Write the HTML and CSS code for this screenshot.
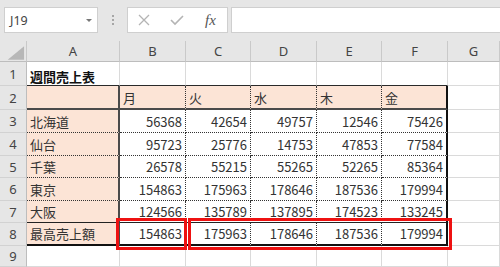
FILE: index.html
```html
<!DOCTYPE html>
<html lang="ja">
<head>
    <meta charset="UTF-8">
    <title>週間売上表</title>
    <link rel="stylesheet" href="styles.css">
</head>
<body>
    <div class="toolbar">
        <div class="namebox">
            <span>J19</span>
            <span class="arrow"></span>
        </div>
        <div class="grip"><i></i><i></i><i></i></div>
        <div class="fxbtns">
            <svg width="14" height="12" viewBox="0 0 14 12"><path d="M2 1 L12 11 M12 1 L2 11" stroke="#b4b4b4" stroke-width="1.3" fill="none"/></svg>
            <svg width="14" height="12" viewBox="0 0 14 12"><path d="M1 6 L5 10 L13 2" stroke="#b4b4b4" stroke-width="1.6" fill="none"/></svg>
            <span class="fx">fx</span>
        </div>
        <div class="formula"></div>
    </div>

    <div class="sheet">
        <!-- column headers -->
        <div class="corner">
            <svg width="27" height="20" viewBox="0 0 27 20"><polygon points="8,19 25,19 25,5" fill="#b7b7b7"/></svg>
        </div>
        <div class="ch">A</div>
        <div class="ch">B</div>
        <div class="ch">C</div>
        <div class="ch">D</div>
        <div class="ch">E</div>
        <div class="ch">F</div>
        <div class="ch">G</div>

        <!-- row 1 -->
        <div class="rh">1</div>
        <div class="c title top">週間売上表</div>
        <div class="c top"></div>
        <div class="c top"></div>
        <div class="c top"></div>
        <div class="c top"></div>
        <div class="c top"></div>
        <div class="c"></div>

        <!-- row 2 -->
        <div class="rh">2</div>
        <div class="c pk ta r2"></div>
        <div class="c pk tm r2">月</div>
        <div class="c pk tm r2">火</div>
        <div class="c pk tm r2">水</div>
        <div class="c pk tm r2">木</div>
        <div class="c pk tf r2">金</div>
        <div class="c"></div>

        <!-- row 3 -->
        <div class="rh">3</div>
        <div class="c pk ta dt">北海道</div>
        <div class="c num tm dt">56368</div>
        <div class="c num tm dt">42654</div>
        <div class="c num tm dt">49757</div>
        <div class="c num tm dt">12546</div>
        <div class="c num tf dt">75426</div>
        <div class="c"></div>

        <!-- row 4 -->
        <div class="rh">4</div>
        <div class="c pk ta dt">仙台</div>
        <div class="c num tm dt">95723</div>
        <div class="c num tm dt">25776</div>
        <div class="c num tm dt">14753</div>
        <div class="c num tm dt">47853</div>
        <div class="c num tf dt">77584</div>
        <div class="c"></div>

        <!-- row 5 -->
        <div class="rh">5</div>
        <div class="c pk ta dt">千葉</div>
        <div class="c num tm dt">26578</div>
        <div class="c num tm dt">55215</div>
        <div class="c num tm dt">55265</div>
        <div class="c num tm dt">52265</div>
        <div class="c num tf dt">85364</div>
        <div class="c"></div>

        <!-- row 6 -->
        <div class="rh">6</div>
        <div class="c pk ta dt">東京</div>
        <div class="c num tm dt">154863</div>
        <div class="c num tm dt">175963</div>
        <div class="c num tm dt">178646</div>
        <div class="c num tm dt">187536</div>
        <div class="c num tf dt">179994</div>
        <div class="c"></div>

        <!-- row 7 -->
        <div class="rh">7</div>
        <div class="c pk ta r7">大阪</div>
        <div class="c num tm r7">124566</div>
        <div class="c num tm r7">135789</div>
        <div class="c num tm r7">137895</div>
        <div class="c num tm r7">174523</div>
        <div class="c num tf r7">133245</div>
        <div class="c"></div>

        <!-- row 8 -->
        <div class="rh">8</div>
        <div class="c pk ta r8">最高売上額</div>
        <div class="c num tm r8">154863</div>
        <div class="c num tm r8">175963</div>
        <div class="c num tm r8">178646</div>
        <div class="c num tm r8">187536</div>
        <div class="c num tf r8">179994</div>
        <div class="c"></div>

        <!-- row 9 -->
        <div class="rh">9</div>
        <div class="c"></div>
        <div class="c"></div>
        <div class="c"></div>
        <div class="c"></div>
        <div class="c"></div>
        <div class="c"></div>
        <div class="c"></div>

        <!-- highlight marks -->
        <div class="mark mark-b"></div>
        <div class="mark mark-cf"></div>
    </div>
</body>
</html>
```

FILE: styles.css
```css
body {
    margin: 0;
    width: 500px;
    height: 267px;
    overflow: hidden;
    background: #fff;
    font-family: 'Noto Sans CJK JP', sans-serif;
    color: #333;
}

/* formula bar */
.toolbar {
    height: 41px;
    box-sizing: border-box;
    padding: 7px 0 0 4px;
    background: #e6e6e6;
    display: flex;
    align-items: flex-start;
}

.namebox {
    width: 94px;
    height: 26px;
    box-sizing: border-box;
    border: 1px solid #cfcfcf;
    background: #fff;
    display: flex;
    align-items: center;
    justify-content: space-between;
    padding: 0 5px 0 5px;
    font-family: 'Noto Sans', sans-serif;
    font-size: 12.5px;
    color: #444;
}

.arrow {
    width: 0;
    height: 0;
    border-left: 3px solid transparent;
    border-right: 3px solid transparent;
    border-top: 3px solid #777;
    margin-top: 1px;
}

.grip {
    width: 29px;
    height: 26px;
    display: flex;
    flex-direction: column;
    align-items: center;
    justify-content: center;
    gap: 2px;
}

.grip i {
    width: 2px;
    height: 2px;
    background: #a6a6a6;
}

.fxbtns {
    width: 101px;
    height: 26px;
    box-sizing: border-box;
    border: 1px solid #cfcfcf;
    background: #fff;
    display: flex;
    align-items: center;
    padding-left: 9px;
    gap: 19px;
}

.fx {
    font-family: 'Liberation Serif', serif;
    font-style: italic;
    font-size: 15px;
    color: #555;
    margin-left: 2px;
}

.formula {
    flex: 1;
    height: 26px;
    margin-left: 3px;
    box-sizing: border-box;
    border: 1px solid #cfcfcf;
    border-right: none;
    background: #fff;
}

/* sheet grid */
.sheet {
    position: relative;
    display: grid;
    grid-template-columns: 27px 93px 66px 65px 66px 65px 66px 52px;
    grid-template-rows: 21px 24px 24px 23px 23px 22px 23px 22px 23px 21px;
}

.corner, .ch, .rh {
    background: #e6e6e6;
    box-sizing: border-box;
    border-right: 1px solid #c9c9c9;
    border-bottom: 1px solid #c9c9c9;
    font-family: 'Noto Sans', sans-serif;
    font-size: 13px;
    color: #444;
    display: flex;
    align-items: center;
    justify-content: center;
}

.corner {
    border-bottom-color: #bdbdbd;
}

.ch {
    border-bottom-color: #bdbdbd;
}

.rh {
    border-right-color: #bdbdbd;
    border-bottom-color: #d2d2d2;
}

.c {
    box-sizing: border-box;
    border-right: 1px solid #dadada;
    border-bottom: 1px solid #dadada;
    padding: 0 3px;
    display: flex;
    align-items: center;
    font-size: 13px;
    white-space: nowrap;
    overflow: hidden;
}

.title {
    font-weight: bold;
    color: #111;
    padding-top: 5px;
}

.num {
    justify-content: flex-end;
}

.pk {
    background: #fce4d6;
}

.top {
    border-bottom: 1px solid #2a2a2a;
}

.ta {
    border-right: 2px solid #4a4a4a;
}

.tm {
    border-right: 1px dotted #333;
}

.tf {
    border-right: 2px solid #111;
}

.r2 {
    border-bottom: 2px solid #4a4a4a;
}

.dt {
    border-bottom: 1px dotted #333;
}

.r7 {
    border-bottom: 1px solid #222;
}

.r8 {
    border-bottom: 2px solid #111;
}

/* red highlight boxes */
.mark {
    position: absolute;
    top: 177px;
    height: 32px;
    box-sizing: border-box;
    border: 3px solid #ee1111;
}

.mark-b {
    left: 116px;
    width: 71px;
}

.mark-cf {
    left: 188px;
    width: 264px;
}
```
